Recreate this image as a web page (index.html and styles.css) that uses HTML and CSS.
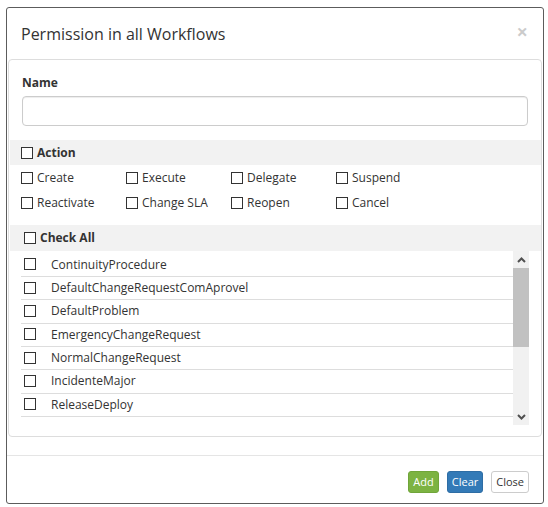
FILE: index.html
```html
<!DOCTYPE html>
<html>
<head>
<meta charset="utf-8">
<link rel="stylesheet" href="styles.css">
</head>
<body>
<div class="modal">
  <div class="modal-header">
    <h4 class="modal-title">Permission in all Workflows</h4>
    <button class="close" type="button">×</button>
  </div>
  <div class="panel">
    <div class="name-field">
      <label class="field-label">Name</label>
      <input class="form-control" type="text">
    </div>
    <div class="band band-action">
      <label class="check bold"><input type="checkbox" class="cb">Action</label>
    </div>
    <div class="actions">
      <label class="check"><input type="checkbox" class="cb">Create</label>
      <label class="check"><input type="checkbox" class="cb">Execute</label>
      <label class="check"><input type="checkbox" class="cb">Delegate</label>
      <label class="check"><input type="checkbox" class="cb">Suspend</label>
      <label class="check"><input type="checkbox" class="cb">Reactivate</label>
      <label class="check"><input type="checkbox" class="cb">Change SLA</label>
      <label class="check"><input type="checkbox" class="cb">Reopen</label>
      <label class="check"><input type="checkbox" class="cb">Cancel</label>
    </div>
    <div class="band band-all">
      <label class="check bold"><input type="checkbox" class="cb">Check All</label>
    </div>
    <div class="list-wrap">
      <ul class="wf-list">
        <li><input type="checkbox" class="cb"><span>ContinuityProcedure</span></li>
        <li><input type="checkbox" class="cb"><span>DefaultChangeRequestComAprovel</span></li>
        <li><input type="checkbox" class="cb"><span>DefaultProblem</span></li>
        <li><input type="checkbox" class="cb"><span>EmergencyChangeRequest</span></li>
        <li><input type="checkbox" class="cb"><span>NormalChangeRequest</span></li>
        <li><input type="checkbox" class="cb"><span>IncidenteMajor</span></li>
        <li><input type="checkbox" class="cb"><span>ReleaseDeploy</span></li>
      </ul>
      <div class="scrollbar">
        <div class="sb-btn"><svg width="9" height="6" viewBox="0 0 9 6"><path d="M1 5 L4.5 1.5 L8 5" fill="none" stroke="#505050" stroke-width="2"/></svg></div>
        <div class="sb-track"><div class="sb-thumb"></div></div>
        <div class="sb-btn"><svg width="9" height="6" viewBox="0 0 9 6"><path d="M1 1 L4.5 4.5 L8 1" fill="none" stroke="#505050" stroke-width="2"/></svg></div>
      </div>
    </div>
  </div>
  <div class="modal-footer">
    <button class="btn btn-add" type="button">Add</button>
    <button class="btn btn-clear" type="button">Clear</button>
    <button class="btn btn-close" type="button">Close</button>
  </div>
</div>
</body>
</html>
```
FILE: styles.css
```css
* { box-sizing: border-box; }
body {
  margin: 0;
  background: #fff;
  font-family: "Open Sans", "DejaVu Sans", sans-serif;
  font-size: 12px;
  color: #333;
}
.modal {
  margin: 7px 0 0 6px;
  width: 538px;
  height: 497px;
  border: 1px solid #5c5c5c;
  border-radius: 3px;
  display: flex;
  flex-direction: column;
  background: #fff;
}
.modal-header {
  height: 51px;
  padding: 0 15px 0 14px;
  display: flex;
  align-items: center;
  justify-content: space-between;
  flex: none;
}
.modal-title {
  margin: 0;
  font-size: 16px;
  font-weight: 400;
  color: #333;
}
.close {
  font-family: "Open Sans", sans-serif;
  font-size: 20px;
  font-weight: 700;
  line-height: 1;
  color: #000;
  opacity: .2;
  border: 0;
  background: none;
  padding: 0;
  margin-top: -4px;
}
.panel {
  margin: 0 1px;
  height: 378px;
  border: 1px solid #ddd;
  border-radius: 4px;
  flex: none;
  padding-bottom: 11px;
}
.name-field {
  padding: 14px 13px 0 13px;
}
.field-label {
  display: block;
  font-weight: 700;
  line-height: 18px;
  margin-bottom: 4px;
}
.form-control {
  display: block;
  width: 100%;
  height: 30px;
  border: 1px solid #ccc;
  border-radius: 4px;
  box-shadow: inset 0 1px 1px rgba(0,0,0,.075);
  font: inherit;
}
.cb {
  appearance: none;
  -webkit-appearance: none;
  width: 12px;
  height: 12px;
  margin: 0;
  border: 1px solid #333;
  background: #fff;
  border-radius: 0;
  flex: none;
}
.check {
  display: flex;
  align-items: center;
  gap: 4px;
  line-height: 18px;
}
.bold { font-weight: 700; }
.band {
  background: #f2f2f2;
  margin: 0 0 0 1px;
  display: flex;
  align-items: center;
}
.band-action {
  margin-top: 14px;
  height: 25px;
  padding-left: 11px;
}
.actions {
  display: grid;
  grid-template-columns: repeat(4, 105px);
  grid-auto-rows: 25px;
  align-items: center;
  padding-left: 12px;
}
.band-all {
  margin-top: 10px;
  height: 26px;
  padding-left: 14px;
}
.list-wrap {
  display: flex;
  height: 174px;
  margin: 0 12px 0 12px;
}
.wf-list {
  flex: 1;
  list-style: none;
  margin: 0;
  padding: 2.6px 0 0 0;
  overflow: hidden;
}
.wf-list li {
  display: flex;
  align-items: center;
  height: 23.33px;
  border-bottom: 1px solid #ddd;
  padding-left: 3px;
  padding-bottom: 1px;
  gap: 15px;
}
.scrollbar {
  width: 16px;
  flex: none;
  display: flex;
  flex-direction: column;
  background: #f1f1f1;
}
.sb-btn {
  height: 17px;
  display: flex;
  align-items: center;
  justify-content: center;
  flex: none;
}
.sb-track {
  flex: 1;
}
.sb-thumb {
  height: 79px;
  background: #c1c1c1;
}
.modal-footer {
  margin-top: 18px;
  border-top: 1px solid #e5e5e5;
  padding: 15px 14px 10px 15px;
  display: flex;
  justify-content: flex-end;
  gap: 8px;
}
.btn {
  font-family: "Open Sans", sans-serif;
  font-size: 11px;
  line-height: 18px;
  padding: 1px 4px;
  border: 1px solid transparent;
  border-radius: 3px;
  height: 22px;
}
.btn-add {
  background: #7cb342;
  border-color: #70a53a;
  color: #fff;
}
.btn-clear {
  background: #337ab7;
  border-color: #2e6da4;
  color: #fff;
}
.btn-close {
  background: #fff;
  border-color: #ccc;
  color: #333;
}
```
